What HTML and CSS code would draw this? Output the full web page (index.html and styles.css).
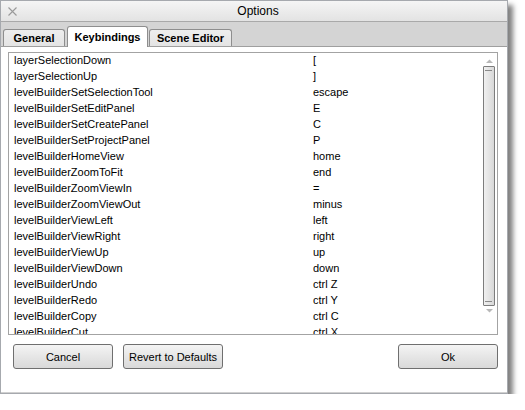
FILE: index.html
```html
<!DOCTYPE html>
<html>
<head>
<meta charset="utf-8">
<link rel="stylesheet" href="styles.css">
</head>
<body>
<div class="window">
  <div class="titlebar">
    <svg class="close" width="9" height="9" viewBox="0 0 9 9"><path d="M0.5 0.5 L8.5 8.5 M8.5 0.5 L0.5 8.5" stroke="#9a9a9a" stroke-width="1.1" fill="none"/></svg>
    <span class="title">Options</span>
  </div>
  <div class="tabstrip">
    <div class="tab tab-general">General</div>
    <div class="tab active">Keybindings</div>
    <div class="tab tab-scene">Scene Editor</div>
  </div>
  <div class="content">
    <div class="list">
      <div class="rows">
        <div class="row"><span class="name">layerSelectionDown</span><span class="key">[</span></div>
        <div class="row"><span class="name">layerSelectionUp</span><span class="key">]</span></div>
        <div class="row"><span class="name">levelBuilderSetSelectionTool</span><span class="key">escape</span></div>
        <div class="row"><span class="name">levelBuilderSetEditPanel</span><span class="key">E</span></div>
        <div class="row"><span class="name">levelBuilderSetCreatePanel</span><span class="key">C</span></div>
        <div class="row"><span class="name">levelBuilderSetProjectPanel</span><span class="key">P</span></div>
        <div class="row"><span class="name">levelBuilderHomeView</span><span class="key">home</span></div>
        <div class="row"><span class="name">levelBuilderZoomToFit</span><span class="key">end</span></div>
        <div class="row"><span class="name">levelBuilderZoomViewIn</span><span class="key">=</span></div>
        <div class="row"><span class="name">levelBuilderZoomViewOut</span><span class="key">minus</span></div>
        <div class="row"><span class="name">levelBuilderViewLeft</span><span class="key">left</span></div>
        <div class="row"><span class="name">levelBuilderViewRight</span><span class="key">right</span></div>
        <div class="row"><span class="name">levelBuilderViewUp</span><span class="key">up</span></div>
        <div class="row"><span class="name">levelBuilderViewDown</span><span class="key">down</span></div>
        <div class="row"><span class="name">levelBuilderUndo</span><span class="key">ctrl Z</span></div>
        <div class="row"><span class="name">levelBuilderRedo</span><span class="key">ctrl Y</span></div>
        <div class="row"><span class="name">levelBuilderCopy</span><span class="key">ctrl C</span></div>
        <div class="row"><span class="name">levelBuilderCut</span><span class="key">ctrl X</span></div>
      </div>
      <div class="scrollbar">
        <svg class="arrow" width="7" height="4" viewBox="0 0 7 4"><path d="M0 4 L3.5 0.5 L7 4 Z" fill="#b8b8b8"/></svg>
        <div class="thumb">
          <div class="grip"></div>
          <div class="grip"></div>
        </div>
        <svg class="arrow" width="7" height="4" viewBox="0 0 7 4"><path d="M0 0 L3.5 3.5 L7 0 Z" fill="#b8b8b8"/></svg>
      </div>
    </div>
    <div class="buttons">
      <button class="btn">Cancel</button>
      <button class="btn">Revert to Defaults</button>
      <span class="spacer"></span>
      <button class="btn">Ok</button>
    </div>
  </div>
</div>
</body>
</html>
```

FILE: styles.css
```css
html, body {
  margin: 0;
  padding: 0;
  background: #ffffff;
}
body {
  font-family: "Liberation Sans", Arial, sans-serif;
  font-size: 11px;
  color: #000;
}
.window {
  width: 506px;
  height: 392px;
  border: 1px solid #a6a9ae;
  display: flex;
  flex-direction: column;
  box-shadow: 5px 5px 5px rgba(0, 0, 0, 0.5);
  background: #ffffff;
}
.titlebar {
  height: 20px;
  border-bottom: 1px solid #a9a9a9;
  background: linear-gradient(#f5f5f5, #e3e3e3);
  display: flex;
  align-items: center;
  justify-content: center;
  position: relative;
  flex: none;
}
.close {
  position: absolute;
  left: 7px;
  top: 6px;
}
.title {
  font-size: 12px;
  padding-left: 8px;
  color: #000;
}
.tabstrip {
  height: 24px;
  background: #d4d4d4;
  display: flex;
  align-items: flex-end;
  padding-left: 2px;
  gap: 2px;
  border-bottom: 1px solid #9f9f9f;
  flex: none;
}
.tab {
  height: 17px;
  font-weight: bold;
  font-size: 11px;
  border: 1px solid #8e8e8e;
  border-bottom: none;
  border-radius: 3px 3px 0 0;
  background: linear-gradient(#eeeeee, #e4e4e4);
  display: flex;
  align-items: center;
  justify-content: center;
  box-sizing: border-box;
  padding: 0;
}
.tab-general {
  width: 62px;
}
.tab.active {
  width: 81px;
  height: 21px;
  background: #ffffff;
  margin-bottom: -1px;
  padding-bottom: 1px;
  position: relative;
}
.tab-scene {
  width: 83px;
  margin-left: -1px;
}
.content {
  flex: 1;
  background: #ffffff;
  padding: 5px 9px 0 7px;
  display: flex;
  flex-direction: column;
  border-bottom: 1px solid #d0d0d0;
}
.list {
  height: 281px;
  border: 1px solid #a3a3a3;
  display: flex;
  overflow: hidden;
  flex: none;
}
.rows {
  flex: 1;
  overflow: hidden;
}
.row {
  height: 16px;
  line-height: 15px;
  display: flex;
  padding-left: 5px;
  white-space: nowrap;
}
.name {
  width: 299px;
}
.scrollbar {
  width: 14px;
  margin-right: 1px;
  display: flex;
  flex-direction: column;
  align-items: center;
  padding-top: 6px;
  gap: 3px;
}
.arrow {
  flex: none;
}
.thumb {
  width: 10px;
  height: 232px;
  border: 1px solid #7d7d7d;
  border-radius: 1px;
  background: linear-gradient(90deg, #f0f0f0, #e2e2e2 60%, #d8d8d8);
  display: flex;
  flex-direction: column;
  justify-content: space-between;
  align-items: center;
  padding: 3px 0;
  box-sizing: content-box;
  margin-left: -1px;
}
.grip {
  width: 7px;
  height: 1px;
  background: #8a8a8a;
}
.buttons {
  display: flex;
  margin-top: 9px;
  padding-left: 5px;
  gap: 10px;
}
.spacer {
  flex: 1;
}
.btn {
  width: 100px;
  height: 25px;
  border: 1px solid #6f6f6f;
  border-radius: 3px;
  background: linear-gradient(#f4f4f4, #e6e6e6 50%, #d9d9d9);
  font-family: "Liberation Sans", Arial, sans-serif;
  font-size: 11px;
  color: #000;
  padding: 0;
}
```
